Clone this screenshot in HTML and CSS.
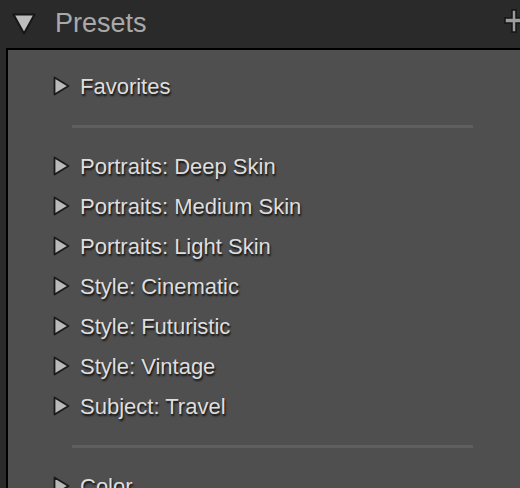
FILE: index.html
```html
<!DOCTYPE html>
<html>
<head>
<meta charset="utf-8">
<link rel="stylesheet" href="styles.css">
</head>
<body>
<div class="header">
  <svg class="hdr-tri" width="24" height="22" viewBox="0 0 24 22"><polygon points="1.5,1.5 22.5,1.5 12,20.5" fill="#bdbdbd" stroke="#161616" stroke-width="2" stroke-linejoin="round"/></svg>
  <span class="title">Presets</span>
  <svg class="plus" width="18" height="24" viewBox="0 0 18 24"><path d="M8,1 H12 V9 H20 V14 H12 V23 H8 V14 H1 V9 H8 Z" fill="#9c9c9c" stroke="#151515" stroke-width="1.5"/></svg>
</div>
<div class="panel">
  <div class="row"><svg class="tri" width="17" height="20" viewBox="0 0 17 20"><polygon points="1.5,1.5 15.5,10 1.5,18.5" fill="#b9b9b9" stroke="#1a1a1a" stroke-width="1.8" stroke-linejoin="round"/></svg><span class="label">Favorites</span></div>
  <div class="sep"><div class="line"></div></div>
  <div class="row"><svg class="tri" width="17" height="20" viewBox="0 0 17 20"><polygon points="1.5,1.5 15.5,10 1.5,18.5" fill="#b9b9b9" stroke="#1a1a1a" stroke-width="1.8" stroke-linejoin="round"/></svg><span class="label">Portraits: Deep Skin</span></div>
  <div class="row"><svg class="tri" width="17" height="20" viewBox="0 0 17 20"><polygon points="1.5,1.5 15.5,10 1.5,18.5" fill="#b9b9b9" stroke="#1a1a1a" stroke-width="1.8" stroke-linejoin="round"/></svg><span class="label">Portraits: Medium Skin</span></div>
  <div class="row"><svg class="tri" width="17" height="20" viewBox="0 0 17 20"><polygon points="1.5,1.5 15.5,10 1.5,18.5" fill="#b9b9b9" stroke="#1a1a1a" stroke-width="1.8" stroke-linejoin="round"/></svg><span class="label">Portraits: Light Skin</span></div>
  <div class="row"><svg class="tri" width="17" height="20" viewBox="0 0 17 20"><polygon points="1.5,1.5 15.5,10 1.5,18.5" fill="#b9b9b9" stroke="#1a1a1a" stroke-width="1.8" stroke-linejoin="round"/></svg><span class="label">Style: Cinematic</span></div>
  <div class="row"><svg class="tri" width="17" height="20" viewBox="0 0 17 20"><polygon points="1.5,1.5 15.5,10 1.5,18.5" fill="#b9b9b9" stroke="#1a1a1a" stroke-width="1.8" stroke-linejoin="round"/></svg><span class="label">Style: Futuristic</span></div>
  <div class="row"><svg class="tri" width="17" height="20" viewBox="0 0 17 20"><polygon points="1.5,1.5 15.5,10 1.5,18.5" fill="#b9b9b9" stroke="#1a1a1a" stroke-width="1.8" stroke-linejoin="round"/></svg><span class="label">Style: Vintage</span></div>
  <div class="row"><svg class="tri" width="17" height="20" viewBox="0 0 17 20"><polygon points="1.5,1.5 15.5,10 1.5,18.5" fill="#b9b9b9" stroke="#1a1a1a" stroke-width="1.8" stroke-linejoin="round"/></svg><span class="label">Subject: Travel</span></div>
  <div class="sep"><div class="line"></div></div>
  <div class="row"><svg class="tri" width="17" height="20" viewBox="0 0 17 20"><polygon points="1.5,1.5 15.5,10 1.5,18.5" fill="#b9b9b9" stroke="#1a1a1a" stroke-width="1.8" stroke-linejoin="round"/></svg><span class="label">Color</span></div>
</div>
</body>
</html>
```
FILE: styles.css
```css
html, body {
  margin: 0;
  padding: 0;
  background: #2a2a2a;
  overflow: hidden;
  height: 488px;
}
body {
  font-family: "Liberation Sans", Arial, sans-serif;
}
.header {
  height: 48px;
  display: flex;
  align-items: center;
  position: relative;
}
.hdr-tri {
  margin-left: 12px;
}
.title {
  margin-left: 19px;
  font-size: 27px;
  color: #a9a9a9;
  margin-top: -2px;
}
.plus {
  position: absolute;
  left: 504px;
  top: 9px;
}
.panel {
  margin-left: 6px;
  border-left: 2px solid #000;
  border-top: 2px solid #000;
  background: #4f4f4f;
  padding-top: 16px;
  height: 470px;
  overflow: hidden;
}
.row {
  height: 40px;
  display: flex;
  align-items: center;
  padding-left: 45px;
}
.tri {
  flex: none;
}
.label {
  margin-left: 10px;
  margin-top: 2px;
  font-size: 22px;
  color: #dedede;
  text-shadow: 1px 2px 2px rgba(0,0,0,0.8);
}
.sep {
  height: 40px;
  display: flex;
  align-items: center;
  padding-left: 64px;
}
.line {
  width: 401px;
  height: 3px;
  background: #5f5f5f;
}
```
